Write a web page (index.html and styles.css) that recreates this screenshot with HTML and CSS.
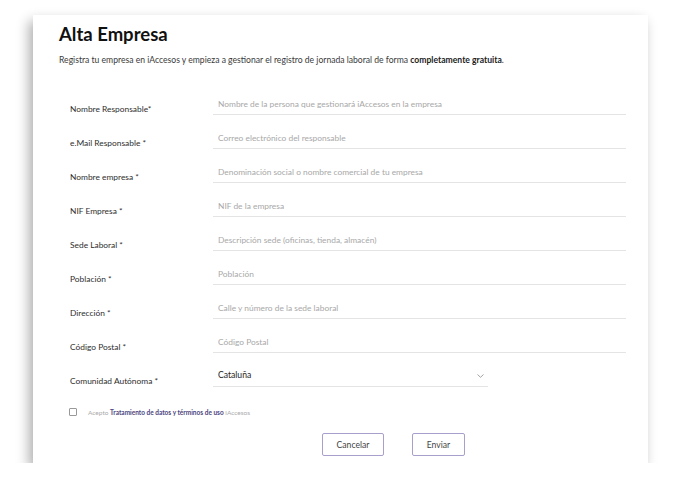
FILE: index.html
```html
<!DOCTYPE html>
<html lang="es">
<head>
<meta charset="utf-8">
<title>Alta Empresa</title>
<link rel="stylesheet" href="styles.css">
</head>
<body>
<div class="card">
  <h1 class="title">Alta Empresa</h1>
  <p class="intro">Registra tu empresa en iAccesos y empieza a gestionar el registro de jornada laboral de forma <strong>completamente gratuita</strong>.</p>
  <form class="form">
    <div class="row"><label class="label">Nombre Responsable*</label><input class="input" placeholder="Nombre de la persona que gestionará iAccesos en la empresa"></div>
    <div class="row"><label class="label">e.Mail Responsable *</label><input class="input" placeholder="Correo electrónico del responsable"></div>
    <div class="row"><label class="label">Nombre empresa *</label><input class="input" placeholder="Denominación social o nombre comercial de tu empresa"></div>
    <div class="row"><label class="label">NIF Empresa *</label><input class="input" placeholder="NIF de la empresa"></div>
    <div class="row"><label class="label">Sede Laboral *</label><input class="input" placeholder="Descripción sede (oficinas, tienda, almacén)"></div>
    <div class="row"><label class="label">Población *</label><input class="input" placeholder="Población"></div>
    <div class="row"><label class="label">Dirección *</label><input class="input" placeholder="Calle y número de la sede laboral"></div>
    <div class="row"><label class="label">Código Postal *</label><input class="input" placeholder="Código Postal"></div>
    <div class="row"><label class="label">Comunidad Autónoma *</label>
      <div class="select"><span class="select-value">Cataluña</span>
        <svg class="chev" width="7" height="4" viewBox="0 0 7 4"><path d="M0.5 0.5 L3.5 3.3 L6.5 0.5" fill="none" stroke="#999" stroke-width="0.9"/></svg>
      </div>
    </div>
    <div class="terms"><span class="check"></span><span class="terms-text">Acepto <b class="link">Tratamiento de datos y términos de uso</b> iAccesos</span></div>
    <div class="actions"><button type="button" class="btn">Cancelar</button><button type="button" class="btn btn-send">Enviar</button></div>
  </form>
</div>
</body>
</html>
```
FILE: styles.css
```css
html, body { margin: 0; padding: 0; background: #fff; }
body { font-family: Lato, "Open Sans", sans-serif; color: #333; }
.card {
  margin: 15px 0 0 33px;
  width: 615px;
  height: 448px;
  background: #fff;
  box-shadow: -4px 6px 12px rgba(0,0,0,0.32);
  box-sizing: border-box;
  padding: 7px 22px 0 26px;
}
.title { margin: 0; font-size: 18.5px; font-weight: 700; color: #111; line-height: 24px; }
.intro { margin: 7px 0 0; font-size: 8.6px; line-height: 14px; color: #3a3a3a; }
.intro strong { font-weight: 700; color: #222; }
.form { margin: 25px 0 0 11px; }
.row { display: flex; height: 34px; align-items: flex-start; }
.label { width: 143px; margin-top: 10px; font-size: 8.4px; line-height: 14px; color: #2e2e2e; }
.input {
  width: 413px; height: 22px; margin-top: 1px; box-sizing: border-box;
  border: 0; border-bottom: 1.5px solid #e4e4e4; outline: none; padding: 0 5px;
  font-family: inherit; font-size: 8.4px; color: #333; background: transparent;
}
.input::placeholder { color: #a8a8a8; }
.select {
  width: 275px; height: 22px; margin-top: 1px; box-sizing: border-box;
  border-bottom: 1.5px solid #e4e4e4; padding: 0 4px 0 5px;
  display: flex; align-items: center; justify-content: space-between;
}
.select-value { font-size: 8.6px; color: #222; margin-top: -1px; }
.chev { margin-right: 0; }
.terms { display: flex; align-items: center; margin-top: 10px; margin-left: -1px; }
.check { width: 6px; height: 6px; border: 1px solid #999; border-radius: 1px; }
.terms-text { margin-left: 11px; font-size: 6.5px; color: #aaa; }
.link { color: #4d4580; font-weight: 700; }
.actions { display: flex; gap: 28px; margin: 17px 0 0 252px; }
.btn {
  height: 23px; padding: 0; background: #fff; border: 1px solid #a99fcd; border-radius: 2px;
  font-family: inherit; font-size: 8.6px; color: #444;
  width: 62px;
}
.btn-send { width: 53px; }
```
